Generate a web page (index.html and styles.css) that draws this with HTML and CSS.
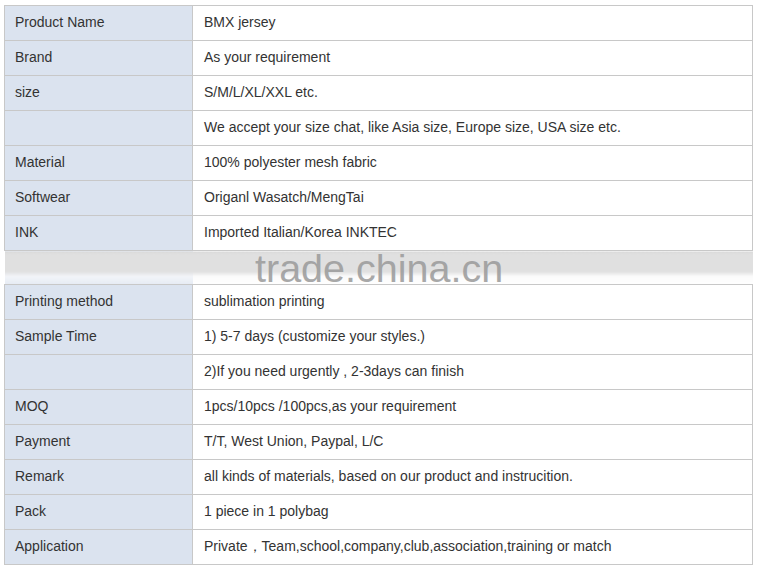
FILE: index.html
```html
<!DOCTYPE html>
<html>
<head>
<meta charset="utf-8">
<link rel="stylesheet" href="styles.css">
</head>
<body>
<div class="wrap">
<table class="spec">
<colgroup><col class="c1"><col class="c2"></colgroup>
<tr><td class="k">Product Name</td><td>BMX jersey</td></tr>
<tr><td class="k">Brand</td><td>As your requirement</td></tr>
<tr><td class="k">size</td><td>S/M/L/XL/XXL etc.</td></tr>
<tr><td class="k"></td><td>We accept your size chat, like Asia size, Europe size, USA size etc.</td></tr>
<tr><td class="k">Material</td><td>100% polyester mesh fabric</td></tr>
<tr><td class="k">Softwear</td><td>Origanl Wasatch/MengTai</td></tr>
<tr><td class="k">INK</td><td>Imported Italian/Korea INKTEC</td></tr>
<tr class="band"><td class="k"></td><td></td></tr>
<tr><td class="k">Printing method</td><td>sublimation printing</td></tr>
<tr><td class="k">Sample Time</td><td>1) 5-7 days (customize your styles.)</td></tr>
<tr><td class="k"></td><td>2)If you need urgently , 2-3days can finish</td></tr>
<tr><td class="k">MOQ</td><td>1pcs/10pcs /100pcs,as your requirement</td></tr>
<tr><td class="k">Payment</td><td>T/T, West Union, Paypal, L/C</td></tr>
<tr><td class="k">Remark</td><td>all kinds of materials, based on our product and instrucition.</td></tr>
<tr><td class="k">Pack</td><td>1 piece in 1 polybag</td></tr>
<tr><td class="k">Application</td><td>Private，Team,school,company,club,association,training or match</td></tr>
</table>
<div class="watermark">trade.china.cn</div>
</div>
</body>
</html>
```
FILE: styles.css
```css
html, body {
  margin: 0;
  padding: 0;
  background: #fff;
}
body {
  padding: 5px 4px;
  font-family: "Liberation Sans", Arial, sans-serif;
  font-size: 14px;
  color: #333;
}
.wrap {
  position: relative;
  width: 749px;
}
.spec {
  width: 749px;
  table-layout: fixed;
  border-collapse: collapse;
  border: 1px solid #c8c8c8;
}
.c1 { width: 188px; }
.spec td {
  border: 1px solid #c8c8c8;
  height: 34px;
  line-height: 32px;
  padding: 0 0 2px 11px;
  white-space: nowrap;
  box-sizing: border-box;
  vertical-align: middle;
}
.spec td.k {
  background: #dbe3ef;
  padding-left: 10px;
}
.spec tr.band td {
  border-left-color: transparent;
  border-right-color: transparent;
  background: linear-gradient(#d9d9d9 0, #e0e0e0 3px, #e0e0e0 20px, #fbfbfb 25px, #fff 34px);
}
.spec tr.band td.k {
  background: linear-gradient(#d9d9d9 0, #e0e0e0 3px, #e0e0e0 20px, #f2f4f8 25px, #e4eaf3 34px);
}
.watermark {
  position: absolute;
  left: 251px;
  top: 241px;
  font-size: 39.5px;
  line-height: 45px;
  color: #9a9a9a;
  opacity: 0.85;
}
```
